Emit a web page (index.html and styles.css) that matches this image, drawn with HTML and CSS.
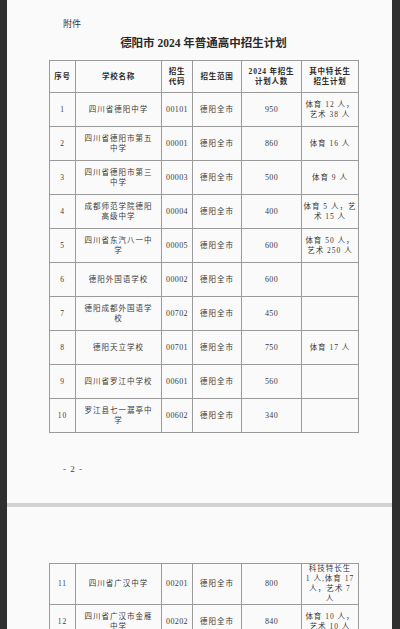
FILE: index.html
```html
<!DOCTYPE html>
<html lang="zh">
<head>
<meta charset="utf-8">
<link rel="stylesheet" href="styles.css">
</head>
<body>
<div class="viewer">
  <section class="page page-one">
    <div class="doc">
      <div class="attach">附件</div>
      <h1 class="title">德阳市 2024 年普通高中招生计划</h1>
      <table class="plan">
        <colgroup>
          <col class="c-no"><col class="c-name"><col class="c-code"><col class="c-range"><col class="c-num"><col class="c-spec">
        </colgroup>
        <thead>
          <tr class="head">
            <th>序号</th><th>学校名称</th><th>招生<br>代码</th><th>招生范围</th><th>2024 年招生<br>计划人数</th><th>其中特长生<br>招生计划</th>
          </tr>
        </thead>
        <tbody>
          <tr><td>1</td><td>四川省德阳中学</td><td class="code">00101</td><td>德阳全市</td><td class="code">950</td><td>体育 12 人，<br>艺术 38 人</td></tr>
          <tr><td>2</td><td>四川省德阳市第五<br>中学</td><td class="code">00001</td><td>德阳全市</td><td class="code">860</td><td>体育 16 人</td></tr>
          <tr><td>3</td><td>四川省德阳市第三<br>中学</td><td class="code">00003</td><td>德阳全市</td><td class="code">500</td><td>体育 9 人</td></tr>
          <tr><td>4</td><td>成都师范学院德阳<br>高级中学</td><td class="code">00004</td><td>德阳全市</td><td class="code">400</td><td>体育 5 人，艺<br>术 15 人</td></tr>
          <tr><td>5</td><td>四川省东汽八一中<br>学</td><td class="code">00005</td><td>德阳全市</td><td class="code">600</td><td>体育 50 人，<br>艺术 250 人</td></tr>
          <tr><td>6</td><td>德阳外国语学校</td><td class="code">00002</td><td>德阳全市</td><td class="code">600</td><td></td></tr>
          <tr><td>7</td><td>德阳成都外国语学<br>校</td><td class="code">00702</td><td>德阳全市</td><td class="code">450</td><td></td></tr>
          <tr><td>8</td><td>德阳天立学校</td><td class="code">00701</td><td>德阳全市</td><td class="code">750</td><td>体育 17 人</td></tr>
          <tr><td>9</td><td>四川省罗江中学校</td><td class="code">00601</td><td>德阳全市</td><td class="code">560</td><td></td></tr>
          <tr><td>10</td><td>罗江县七一潺亭中<br>学</td><td class="code">00602</td><td>德阳全市</td><td class="code">340</td><td></td></tr>
        </tbody>
      </table>
      <div class="pageno">- 2 -</div>
    </div>
  </section>
  <div class="gap"></div>
  <section class="page page-two">
    <div class="doc">
      <table class="plan">
        <colgroup>
          <col class="c-no"><col class="c-name"><col class="c-code"><col class="c-range"><col class="c-num"><col class="c-spec">
        </colgroup>
        <tbody>
          <tr class="tall"><td>11</td><td>四川省广汉中学</td><td class="code">00201</td><td>德阳全市</td><td class="code">800</td><td>科技特长生<br>1 人,体育 17<br>人，艺术 7<br>人</td></tr>
          <tr><td>12</td><td>四川省广汉市金雁<br>中学</td><td class="code">00202</td><td>德阳全市</td><td class="code">840</td><td>体育 10 人，<br>艺术 10 人</td></tr>
        </tbody>
      </table>
    </div>
  </section>
</div>
</body>
</html>
```
FILE: styles.css
```css
html, body {
  margin: 0;
  padding: 0;
  background: #2f2f2f;
  height: 629px;
  overflow: hidden;
}
.viewer {
  margin: 0 8px 0 7px;
  font-family: "Liberation Serif", "Noto Sans CJK SC", serif;
  color: #333;
}
.page {
  background: #fafafa;
}
.page-one {
  height: 503px;
}
.gap {
  height: 4px;
  background: #d2d2d2;
}
.page-two {
  height: 122px;
  padding-top: 56px;
  box-sizing: border-box;
  overflow: hidden;
}
.doc {
  margin-left: 42px;
  width: 309px;
}
.page-one .doc {
  padding-top: 19px;
}
.attach {
  margin-left: 14px;
  font-size: 9px;
  line-height: 11px;
  color: #333;
}
.title {
  margin: 4px 0 0 0;
  text-align: center;
  font-size: 11.5px;
  line-height: 18px;
  height: 26px;
  font-weight: bold;
  color: #2a2a2a;
}
.plan {
  border-collapse: collapse;
  width: 309px;
  table-layout: fixed;
}
.c-no { width: 26px; }
.c-name { width: 86px; }
.c-code { width: 31px; }
.c-range { width: 49px; }
.c-num { width: 60px; }
.c-spec { width: 57px; }
.plan th, .plan td {
  border: 1px solid #9a9a9a;
  padding: 0;
  text-align: center;
  vertical-align: middle;
  font-size: 7.5px;
  line-height: 10px;
  letter-spacing: 1px;
  white-space: nowrap;
  overflow: hidden;
  color: #3a3a3a;
}
.plan th {
  font-weight: bold;
  color: #2a2a2a;
  letter-spacing: 0.8px;
}
.plan td.code {
  letter-spacing: 0.4px;
  font-size: 8px;
}
.plan tr.head { height: 32px; }
.plan tbody tr { height: 34px; }
.plan tbody tr.tall { height: 39px; }
.pageno {
  margin-top: 31px;
  margin-left: 14px;
  font-size: 9px;
  letter-spacing: 1px;
  color: #444;
}
```
